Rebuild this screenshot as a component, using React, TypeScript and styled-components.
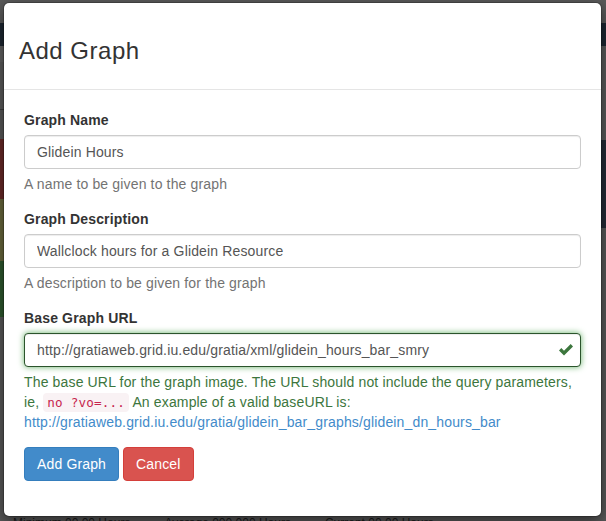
import React from "react";
import styled, { createGlobalStyle, css } from "styled-components";

const GlobalStyle = createGlobalStyle`
  html, body { margin: 0; padding: 0; }
  body {
    font-family: "Helvetica Neue", Helvetica, "Liberation Sans", Arial, sans-serif;
    font-size: 14px;
    line-height: 1.428571429;
    color: #333;
    background: #5a5a5a;
  }
  * { box-sizing: border-box; }
`;

const Page = styled.div`
  position: relative;
  width: 606px;
  height: 521px;
  overflow: hidden;
  display: flex;
  flex-direction: column;
  background: #5a5a5a;
`;

const TopStrip = styled.div`
  height: 23px;
  background: #5b5b5b;
`;

const Navbar = styled.div`
  height: 23px;
  background: #1e2833;
`;

const Main = styled.div`
  flex: 1;
  display: flex;
  justify-content: space-between;
`;

const Rail = styled.div<{ $width: number }>`
  width: ${(p) => p.$width}px;
  display: flex;
  flex-direction: column;
`;

const Band = styled.div<{ $h: number; $bg: string; $line?: boolean }>`
  height: ${(p) => p.$h}px;
  flex: none;
  background: ${(p) => p.$bg};
  ${(p) =>
    p.$line &&
    css`
      border-bottom: 1px solid #3f3f3f;
    `}
`;

const Footer = styled.div`
  height: 4px;
  padding-left: 13px;
  font-size: 12px;
  line-height: 12px;
  color: #1c1c1c;
  white-space: nowrap;
  display: flex;
  gap: 34px;
`;

const Modal = styled.div`
  position: absolute;
  left: 3px;
  top: 2px;
  width: 599px;
  background: #fff;
  background-clip: padding-box;
  border: 1px solid rgba(0, 0, 0, 0.2);
  border-radius: 6px;
  box-shadow: 0 5px 15px rgba(0, 0, 0, 0.5);
  letter-spacing: 0.15px;
`;

const Header = styled.div`
  padding: 15px;
  border-bottom: 1px solid #e5e5e5;
`;

const Title = styled.h3`
  margin: 20px 0 10px;
  font-size: 24px;
  font-weight: 500;
  line-height: 1.1;
  letter-spacing: 0.5px;
  color: #333;
`;

const Body = styled.div`
  padding: 20px;
`;

const FormGroup = styled.div`
  margin-bottom: 15px;
`;

const Label = styled.label`
  display: block;
  margin-bottom: 5px;
  font-weight: bold;
  color: #333;
`;

const InputWrap = styled.div`
  position: relative;
`;

const Input = styled.input<{ $success?: boolean }>`
  display: block;
  width: 100%;
  height: 34px;
  padding: 6px 12px;
  font-family: inherit;
  font-size: 14px;
  letter-spacing: 0.15px;
  line-height: 1.428571429;
  color: #555;
  background: #fff;
  border: 1px solid #ccc;
  border-radius: 4px;
  box-shadow: inset 0 1px 1px rgba(0, 0, 0, 0.075);
  outline: none;
  ${(p) =>
    p.$success &&
    css`
      padding-right: 42px;
      border-color: #2b542c;
      box-shadow: inset 0 1px 1px rgba(0, 0, 0, 0.075), 0 0 6px #67b168;
    `}
`;

const Feedback = styled.span`
  position: absolute;
  top: 0;
  right: 0;
  width: 31px;
  height: 34px;
  display: flex;
  align-items: center;
  justify-content: center;
  color: #3c763d;
`;

const HelpBlock = styled.p<{ $tone?: "muted" | "success" }>`
  margin: 5px 0 0;
  color: ${(p) => (p.$tone === "success" ? "#3c763d" : "#737373")};
`;

const Code = styled.code`
  padding: 2px 4px;
  font-family: Menlo, Monaco, "DejaVu Sans Mono", "Liberation Mono", monospace;
  font-size: 90%;
  letter-spacing: 0.2px;
  color: #c7254e;
  background: #f9f2f4;
  border-radius: 4px;
  white-space: nowrap;
`;

const Link = styled.a`
  color: #428bca;
  text-decoration: none;
`;

const ButtonRow = styled.div`
  display: flex;
  gap: 4px;
  margin-bottom: 15px;
`;

const Button = styled.button<{ $variant: "primary" | "danger" }>`
  padding: 6px 12px;
  font-family: inherit;
  font-size: 14px;
  letter-spacing: 0.15px;
  line-height: 1.428571429;
  color: #fff;
  border: 1px solid;
  border-radius: 4px;
  cursor: pointer;
  ${(p) =>
    p.$variant === "primary"
      ? css`
          background: #428bca;
          border-color: #357ebd;
        `
      : css`
          background: #d9534f;
          border-color: #d43f3a;
        `}
`;

const OkIcon = () => (
  <svg width="14" height="12" viewBox="0 0 14 12" aria-hidden="true">
    <polygon
      points="0,6.4 2.3,4.1 5,6.8 11.7,0.1 14,2.4 5,11.4"
      fill="currentColor"
    />
  </svg>
);

export default function App() {
  return (
    <>
      <GlobalStyle />
      <Page>
        <TopStrip />
        <Navbar />
        <Main>
          <Rail $width={14}>
            <Band $h={16} $bg="#636363" />
            <Band $h={48} $bg="#5d5d5d" $line />
            <Band $h={29} $bg="#5b5b5b" />
            <Band $h={60} $bg="#6b2b28" />
            <Band $h={62} $bg="#6b6a3e" />
            <Band $h={56} $bg="#2f5a2f" />
          </Rail>
          <Rail $width={12}>
            <Band $h={94} $bg="#5c5c5c" />
            <Band $h={88} $bg="#252b37" />
          </Rail>
        </Main>
        <Footer>
          <span>Minimum 00.00 Hours</span>
          <span>Average 000.000 Hours</span>
          <span>Current 00.00 Hours</span>
        </Footer>
        <Modal>
          <Header>
            <Title>Add Graph</Title>
          </Header>
          <Body>
            <FormGroup>
              <Label>Graph Name</Label>
              <InputWrap>
                <Input defaultValue="Glidein Hours" />
              </InputWrap>
              <HelpBlock>A name to be given to the graph</HelpBlock>
            </FormGroup>
            <FormGroup>
              <Label>Graph Description</Label>
              <InputWrap>
                <Input defaultValue="Wallclock hours for a Glidein Resource" />
              </InputWrap>
              <HelpBlock>A description to be given for the graph</HelpBlock>
            </FormGroup>
            <FormGroup>
              <Label>Base Graph URL</Label>
              <InputWrap>
                <Input
                  $success
                  defaultValue="http://gratiaweb.grid.iu.edu/gratia/xml/glidein_hours_bar_smry"
                />
                <Feedback>
                  <OkIcon />
                </Feedback>
              </InputWrap>
              <HelpBlock $tone="success">
                The base URL for the graph image. The URL should not include the query parameters,
                <br />
                ie, <Code>no ?vo=...</Code> An example of a valid baseURL is:{" "}
                <Link href="#">
                  http://gratiaweb.grid.iu.edu/gratia/glidein_bar_graphs/glidein_dn_hours_bar
                </Link>
              </HelpBlock>
            </FormGroup>
            <ButtonRow>
              <Button $variant="primary">Add Graph</Button>
              <Button $variant="danger">Cancel</Button>
            </ButtonRow>
          </Body>
        </Modal>
      </Page>
    </>
  );
}
